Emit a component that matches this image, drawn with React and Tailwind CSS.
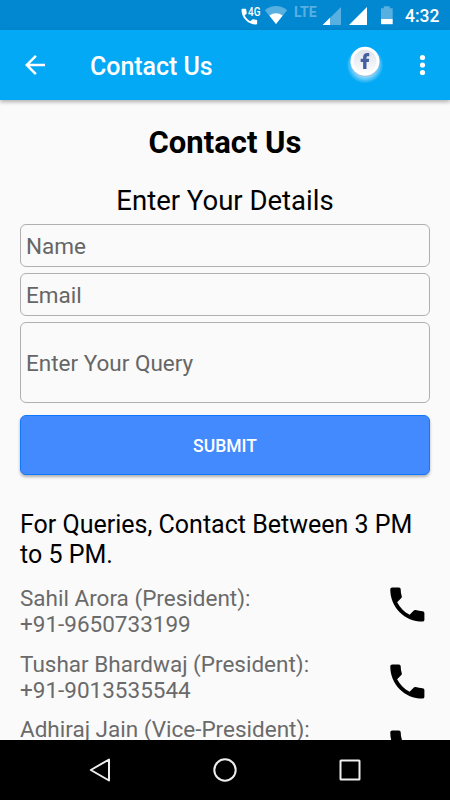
const contacts = [
  { name: 'Sahil Arora (President):', phone: '+91-9650733199' },
  { name: 'Tushar Bhardwaj (President):', phone: '+91-9013535544' },
  { name: 'Adhiraj Jain (Vice-President):' },
];

const PHONE_PATH =
  'M6.62 10.79c1.44 2.83 3.76 5.14 6.59 6.59l2.2-2.2c.27-.27.67-.36 1.02-.24 1.12.37 2.33.57 3.57.57.55 0 1 .45 1 1V20c0 .55-.45 1-1 1-9.39 0-17-7.61-17-17 0-.55.45-1 1-1h3.5c.55 0 1 .45 1 1 0 1.25.2 2.45.57 3.57.11.35.03.74-.25 1.02l-2.2 2.2z';

function StatusBar() {
  return (
    <div className="flex h-[30px] shrink-0 items-center bg-[#0288d1] text-white">
      <svg className="h-[30px] w-[170px] ml-[230px] shrink-0" viewBox="230 0 170 30" fill="#fff">
        <g transform="translate(238.9 6.2) scale(0.87)">
          <path d={PHONE_PATH} />
        </g>
        <text x="248" y="15.5" fontFamily="Roboto, sans-serif" fontSize="12" fontWeight="500" textLength="12.4" lengthAdjust="spacingAndGlyphs">4G</text>
        <path d="M276 24 264.8 10.2Q276 2 287.2 10.2Z" fill="#57b0e0" />
        <path d="M276 24 269.3 15.6Q276 10.8 282.7 15.6Z" />
        <text x="294" y="16.5" fontFamily="Roboto, sans-serif" fontSize="14.5" fontWeight="700" fill="#57b0e0" textLength="22.8" lengthAdjust="spacingAndGlyphs">LTE</text>
        <path d="M322.7 25H341V7Z" fill="#57b0e0" />
        <path d="M322.7 25H330V17.8Z" />
        <path d="M349 25H367V7Z" />
        <path d="M381 8.2h2.8V6.2h6v2h2.9V19H381Z" fill="#57b0e0" />
        <path d="M381 19h11.7v5.2H381Z" />
      </svg>
      <span className="ml-[5px] mt-px text-[17.5px] font-medium leading-5">4:32</span>
    </div>
  );
}

function Toolbar() {
  return (
    <header className="z-10 flex h-[70px] shrink-0 items-center bg-[#03a9f4] text-white shadow-[0_2px_4px_rgba(0,0,0,0.3)]">
      <svg className="ml-5 size-[30px]" viewBox="0 0 24 24" fill="#fff">
        <path d="M20 11H7.83l5.59-5.59L12 4l-8 8 8 8 1.41-1.41L7.83 13H20v-2z" />
      </svg>
      <h1 className="ml-10 mt-1 text-[25px] font-medium leading-[30px] tracking-[-0.05px]">Contact Us</h1>
      <svg className="-mt-[6px] ml-auto size-[46px]" viewBox="342 39 46 46">
        <defs>
          <linearGradient id="disc" x1="0" y1="0" x2="0" y2="1">
            <stop offset="0" stopColor="#dfe3ea" />
            <stop offset="1" stopColor="#fbfcfe" />
          </linearGradient>
          <radialGradient id="halo">
            <stop offset="0.65" stopColor="#c4e9ff" stopOpacity="0.7" />
            <stop offset="1" stopColor="#c4e9ff" stopOpacity="0" />
          </radialGradient>
        </defs>
        <circle cx="365" cy="65" r="18.5" fill="url(#halo)" />
        <circle cx="365" cy="62.2" r="14.3" fill="#9fb4c8" />
        <circle cx="365" cy="61.2" r="14.5" fill="#fff" />
        <circle cx="365" cy="61.2" r="11.5" fill="url(#disc)" />
        <path
          transform="translate(-36.2 -6.1) scale(1.1)"
          d="M363 68.2v-6.2h-2.2v-3h2.2v-1.3c0-2.500 1.500-3.900 3.900-3.900h1.700v2.900h-1.200c-1 0-1.300.5-1.300 1.300v1h2.500l-.4 3h-2.100v6.200Z"
          fill="#4460a0"
        />
      </svg>
      <svg className="ml-5 mr-3 size-[30px]" viewBox="0 0 30 30" fill="#fff">
        <circle cx="14.5" cy="7.5" r="2.6" />
        <circle cx="14.5" cy="15" r="2.6" />
        <circle cx="14.5" cy="22.5" r="2.6" />
      </svg>
    </header>
  );
}

const fieldClass =
  'block w-full rounded-[6px] border border-[#b0b0b0] bg-transparent pl-[5px] text-[22.5px] text-[#666] placeholder:text-[#666] placeholder:opacity-100 outline-none';

function ContactForm() {
  return (
    <form className="mt-[7px] flex flex-col">
      <input className={`${fieldClass} h-[43px]`} placeholder="Name" />
      <input className={`${fieldClass} mt-[6px] h-[43px]`} placeholder="Email" />
      <input className={`${fieldClass} mt-[6px] h-[81px]`} placeholder="Enter Your Query" />
      <button
        type="button"
        className="mt-3 h-[60px] rounded-[6px] border border-[#0e78ff] bg-[#448aff] pt-[2px] text-[17.5px] font-medium text-white shadow-[0_2px_3px_rgba(0,0,0,0.3)]"
      >
        SUBMIT
      </button>
    </form>
  );
}

function PhoneIcon({ className }) {
  return (
    <svg className={`size-[46px] shrink-0 ${className}`} viewBox="0 0 46 46" fill="#000">
      <path transform="translate(0.6 0.8) scale(1.895)" d={PHONE_PATH} />
    </svg>
  );
}

function ContactList() {
  return (
    <div className="mt-[15.6px] flex items-start justify-between">
      <ul className="flex flex-col gap-[13.5px] text-[22.5px] leading-[26px] text-[#6a6a6a]">
        {contacts.map((c) => (
          <li key={c.name}>
            <p>{c.name}</p>
            {c.phone && <p>{c.phone}</p>}
          </li>
        ))}
      </ul>
      <div className="-mt-1 flex flex-col">
        <PhoneIcon className="" />
        <PhoneIcon className="mt-[31px]" />
        <PhoneIcon className="mt-5" />
      </div>
    </div>
  );
}

function NavBar() {
  return (
    <nav className="flex h-[60px] shrink-0 items-center justify-around bg-black px-[37px]">
      <svg className="size-[30px]" viewBox="0 0 30 30" fill="none" stroke="#eee" strokeWidth="2" strokeLinejoin="round">
        <path d="M24 4.500V25.500L5.800 15Z" />
      </svg>
      <svg className="size-[30px]" viewBox="0 0 30 30" fill="none" stroke="#eee" strokeWidth="2">
        <circle cx="15" cy="15" r="10.700" />
      </svg>
      <svg className="size-[30px]" viewBox="0 0 30 30" fill="none" stroke="#eee" strokeWidth="2">
        <rect x="5.500" y="5.500" width="19" height="19" rx="0.500" />
      </svg>
    </nav>
  );
}

export default function App() {
  return (
    <div className="flex h-[800px] w-[450px] flex-col overflow-hidden bg-[#fafafa] font-[Roboto,sans-serif]">
      <StatusBar />
      <Toolbar />
      <main className="min-h-0 flex-1 overflow-hidden px-5 pt-6 text-black">
        <h2 className="text-center text-[31px] font-bold leading-[38px]">Contact Us</h2>
        <p className="mt-[23px] text-center text-[27.5px] leading-8">Enter Your Details</p>
        <ContactForm />
        <p className="mt-[34.5px] text-[25px] leading-[30px]">For Queries, Contact Between 3 PM to 5 PM.</p>
        <ContactList />
      </main>
      <NavBar />
    </div>
  );
}
